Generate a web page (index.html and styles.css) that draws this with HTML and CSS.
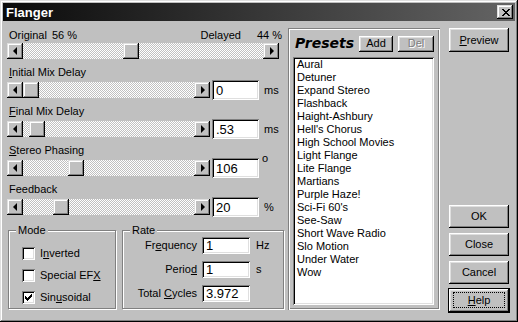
FILE: index.html
```html
<!DOCTYPE html>
<html lang="en">
<head>
  <meta charset="UTF-8" />
  <title>Flanger</title>
  <link rel="stylesheet" href="styles.css">
</head>
<body>
  <div class="window">
    <div class="titlebar">
      <span class="title">Flanger</span>
      <span class="close">
        <svg width="8" height="7" viewBox="0 0 8 7" shape-rendering="crispEdges"><path d="M0 0h2v1H0zM6 0h2v1H6zM1 1h2v1H1zM5 1h2v1H5zM2 2h4v1H2zM3 3h2v1H3zM2 4h4v1H2zM1 5h2v1H1zM5 5h2v1H5zM0 6h2v1H0zM6 6h2v1H6z" fill="#000"/></svg>
      </span>
    </div>

    <div class="client">
      <div class="controls">
        <div class="mix-labels">
          <span class="mix-side"><span>Original</span><span>56 %</span></span>
          <span class="mix-side delayed"><span>Delayed</span><span>44 %</span></span>
        </div>
        <div class="scroll wide">
          <span class="arrow left"></span>
          <span class="track"><span class="thumb" style="margin-left:100px"></span></span>
          <span class="arrow right"></span>
        </div>

        <div class="field">
          <div class="field-label"><u>I</u>nitial Mix Delay</div>
          <div class="field-row">
            <div class="scroll">
              <span class="arrow left"></span>
              <span class="track"><span class="thumb" style="margin-left:0px"></span></span>
              <span class="arrow right"></span>
            </div>
            <div class="edit">0</div>
            <span class="unit">ms</span>
          </div>
        </div>

        <div class="field">
          <div class="field-label"><u>F</u>inal Mix Delay</div>
          <div class="field-row">
            <div class="scroll">
              <span class="arrow left"></span>
              <span class="track"><span class="thumb" style="margin-left:6px"></span></span>
              <span class="arrow right"></span>
            </div>
            <div class="edit">.53</div>
            <span class="unit">ms</span>
          </div>
        </div>

        <div class="field">
          <div class="field-label"><u>S</u>tereo Phasing</div>
          <div class="field-row">
            <div class="scroll">
              <span class="arrow left"></span>
              <span class="track"><span class="thumb" style="margin-left:45px"></span></span>
              <span class="arrow right"></span>
            </div>
            <div class="edit">106</div>
            <span class="unit degree">o</span>
          </div>
        </div>

        <div class="field">
          <div class="field-label">Feedback</div>
          <div class="field-row">
            <div class="scroll">
              <span class="arrow left"></span>
              <span class="track"><span class="thumb" style="margin-left:30px"></span></span>
              <span class="arrow right"></span>
            </div>
            <div class="edit">20</div>
            <span class="unit">%</span>
          </div>
        </div>

        <div class="groups">
          <fieldset class="group mode">
            <legend>Mode</legend>
            <div class="mode-body">
              <div class="check-row"><span class="checkbox"></span><span>I<u>n</u>verted</span></div>
              <div class="check-row"><span class="checkbox"></span><span>Special EF<u>X</u></span></div>
              <div class="check-row">
                <span class="checkbox">
                  <svg width="7" height="7" viewBox="0 0 7 7" shape-rendering="crispEdges"><path d="M0 2h1v3H0zM1 3h1v3H1zM2 4h1v3H2zM3 3h1v3H3zM4 2h1v3H4zM5 1h1v3H5zM6 0h1v3H6z" fill="#000"/></svg>
                </span>
                <span>Sin<u>u</u>soidal</span>
              </div>
            </div>
          </fieldset>

          <fieldset class="group rate">
            <legend>Rate</legend>
            <div class="rate-grid">
              <span class="rate-label">Fr<u>e</u>quency</span>
              <div class="edit small">1</div>
              <span class="rate-unit">Hz</span>
              <span class="rate-label">Perio<u>d</u></span>
              <div class="edit small">1</div>
              <span class="rate-unit">s</span>
              <span class="rate-label">Total <u>C</u>ycles</span>
              <div class="edit small">3.972</div>
              <span class="rate-unit"></span>
            </div>
          </fieldset>
        </div>
      </div>

      <div class="presets">
        <div class="presets-head">
          <span class="presets-title">Presets</span>
          <span class="btn add">Add</span>
          <span class="btn del">Del</span>
        </div>
        <div class="list">
          <div>Aural</div>
          <div>Detuner</div>
          <div>Expand Stereo</div>
          <div>Flashback</div>
          <div>Haight-Ashbury</div>
          <div>Hell's Chorus</div>
          <div>High School Movies</div>
          <div>Light Flange</div>
          <div>Lite Flange</div>
          <div>Martians</div>
          <div>Purple Haze!</div>
          <div>Sci-Fi 60's</div>
          <div>See-Saw</div>
          <div>Short Wave Radio</div>
          <div>Slo Motion</div>
          <div>Under Water</div>
          <div>Wow</div>
        </div>
      </div>

      <div class="buttons">
        <span class="btn preview"><u>P</u>review</span>
        <div class="button-stack">
          <span class="btn">OK</span>
          <span class="btn">Close</span>
          <span class="btn">Cancel</span>
          <span class="btn default"><u>H</u>elp</span>
        </div>
      </div>
    </div>
  </div>
</body>
</html>
```

FILE: styles.css
```css
:root {
  --face: #c0c0c0;
  --light: #dfdfdf;
  --shadow: #808080;
  --dark: #000000;
  --raised: inset -1px -1px #000, inset 1px 1px #fff, inset -2px -2px #808080, inset 2px 2px #dfdfdf;
  --raised-thin: inset -1px -1px #000, inset 1px 1px #dfdfdf, inset -2px -2px #808080, inset 2px 2px #fff;
  --sunken: inset 1px 1px #808080, inset -1px -1px #fff, inset 2px 2px #000, inset -2px -2px #dfdfdf;
}
* {
  box-sizing: border-box;
}
html, body {
  margin: 0;
  padding: 0;
}
body {
  font-family: 'Liberation Sans', Arial, sans-serif;
  font-size: 11px;
  line-height: 13px;
  color: #000;
  background: var(--face);
}
u {
  text-decoration-thickness: 1px;
  text-underline-offset: 1px;
}
.window {
  width: 518px;
  height: 322px;
  padding: 3px;
  background: var(--face);
  box-shadow: var(--raised-thin);
  display: flex;
  flex-direction: column;
}
.titlebar {
  height: 18px;
  flex: none;
  display: flex;
  align-items: center;
  justify-content: space-between;
  padding: 0 2px 0 3px;
  background: linear-gradient(to right, #0a0a0a, #646464);
}
.title {
  color: #fff;
  font-weight: bold;
  font-size: 13px;
}
.close {
  width: 16px;
  height: 14px;
  background: var(--face);
  box-shadow: var(--raised-thin);
  display: flex;
  align-items: center;
  justify-content: center;
  padding-left: 1px;
}
.close svg {
  display: block;
}
.client {
  flex: 1;
  display: flex;
  padding: 7px 0 0 4px;
}
.controls {
  width: 277px;
  padding-top: 1px;
}
.mix-labels {
  display: flex;
  justify-content: space-between;
  padding: 0 2px;
  height: 13px;
}
.mix-side {
  display: flex;
  gap: 5px;
}
.mix-side.delayed {
  gap: 16px;
}
.scroll {
  display: flex;
  height: 16px;
  width: 203px;
  flex: none;
  background: repeating-conic-gradient(#c0c0c0 0 25%, #ffffff 0 50%) 0 0 / 2px 2px;
}
.scroll.wide {
  width: 272px;
  margin-top: 1px;
}
.arrow, .thumb {
  width: 16px;
  height: 16px;
  flex: none;
  background: var(--face);
  box-shadow: var(--raised-thin);
}
.arrow {
  display: flex;
  align-items: center;
  justify-content: center;
}
.arrow::before {
  content: "";
  border: 4px solid transparent;
}
.arrow.left::before {
  border-left-width: 0;
  border-right-color: #000;
  margin-left: -1px;
}
.arrow.right::before {
  border-right-width: 0;
  border-left-color: #000;
  margin-left: 1px;
}
.track {
  flex: 1;
  display: flex;
}
.field {
  margin-top: 5px;
}
.scroll.wide + .field {
  margin-top: 7px;
}
.field-label {
  height: 13px;
  padding-left: 2px;
}
.field-row {
  display: flex;
  align-items: center;
  height: 20px;
  margin-top: 1px;
}
.edit {
  width: 47px;
  height: 20px;
  margin-left: 2px;
  padding-left: 4px;
  background: #fff;
  box-shadow: var(--sunken);
  font-size: 13px;
  line-height: 21px;
}
.edit.small {
  width: 48px;
  height: 17px;
  margin-left: 0;
  line-height: 18px;
}
.unit {
  margin-left: 5px;
}
.unit.degree {
  align-self: flex-start;
  margin-top: -6px;
  margin-left: 3px;
}
.groups {
  display: flex;
  margin-top: 7px;
}
.group {
  margin: 0;
  padding: 0;
  border: 1px solid var(--shadow);
  box-shadow: inset 1px 1px #fff, 1px 1px #fff;
  min-inline-size: 0;
}
.group legend {
  margin-left: 7px;
  padding: 0 2px;
  line-height: 13px;
  background: var(--face);
}
.mode {
  width: 108px;
  margin-left: 1px;
}
.mode-body {
  padding: 10px 0 4px 13px;
  display: flex;
  flex-direction: column;
  gap: 9px;
}
.check-row {
  display: flex;
  align-items: center;
  gap: 5px;
  height: 13px;
}
.checkbox {
  width: 13px;
  height: 13px;
  flex: none;
  background: #fff;
  box-shadow: var(--sunken);
  padding: 3px;
}
.checkbox svg {
  display: block;
}
.rate {
  width: 162px;
  margin-left: 6px;
}
.rate-grid {
  display: grid;
  grid-template-columns: 74px 48px auto;
  grid-auto-rows: 17px;
  column-gap: 5px;
  row-gap: 7px;
  align-items: center;
  padding-bottom: 6px;
}
.rate-label {
  justify-self: end;
}
.rate-unit {
  margin-left: 1px;
}
.presets {
  width: 152px;
  height: 282px;
  margin-left: 4px;
  padding: 7px 6px 5px 5px;
  box-shadow: inset 1px 1px #808080, inset -1px -1px #fff, inset 2px 2px #fff, inset -2px -2px #808080;
  display: flex;
  flex-direction: column;
  gap: 5px;
}
.presets-head {
  display: flex;
  align-items: center;
  height: 17px;
}
.presets-title {
  font-family: 'DejaVu Sans', Verdana, sans-serif;
  font-weight: bold;
  font-style: italic;
  font-size: 14px;
  margin-left: 2px;
}
.btn {
  display: flex;
  align-items: center;
  justify-content: center;
  background: var(--face);
  box-shadow: var(--raised);
  height: 23px;
  width: 60px;
}
.btn.add {
  width: 34px;
  height: 16px;
  margin-left: auto;
}
.btn.del {
  width: 36px;
  height: 16px;
  margin-left: 5px;
  color: var(--shadow);
  text-shadow: 1px 1px #fff;
}
.list {
  flex: 1;
  background: #fff;
  box-shadow: var(--sunken);
  padding: 1px 0 0 4px;
}
.buttons {
  width: 60px;
  margin-left: 9px;
  padding-bottom: 7px;
  display: flex;
  flex-direction: column;
  justify-content: space-between;
}
.btn.preview {
  height: 24px;
}
.button-stack {
  display: flex;
  flex-direction: column;
  gap: 5px;
}
.btn.default {
  position: relative;
  outline: 1px solid #000;
}
.btn.default::after {
  content: "";
  position: absolute;
  inset: 3px 4px 4px 4px;
  border: 1px dotted #000;
}
```
